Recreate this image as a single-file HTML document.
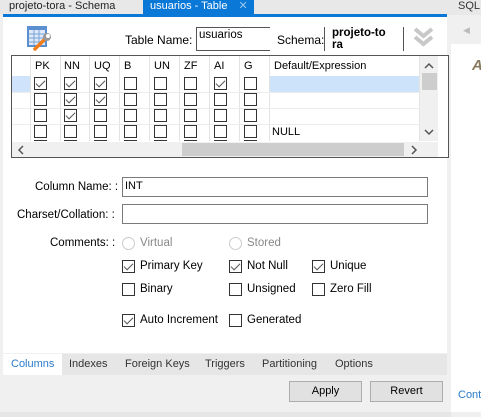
<!DOCTYPE html><html><head><style>
*{margin:0;padding:0;box-sizing:border-box}
body{width:481px;height:417px;background:#f0f0f0;font-family:"Liberation Sans",sans-serif;font-size:11px;color:#000;position:relative;overflow:hidden}
.a{position:absolute}
.cb{position:absolute;width:13px;height:13px;border:1px solid #333;background:#fff}
.cb.k::after{content:"";position:absolute;left:3px;top:0px;width:4px;height:8px;border:solid #555;border-width:0 1.2px 1.2px 0;transform:rotate(45deg)}
.lbl{position:absolute;font-size:11px}
.vl{position:absolute;top:56px;width:1px;height:85px;background:#e3e3e3}
.hl{position:absolute;left:12px;width:408px;height:1px;background:#ececec}
</style></head><body>
<div class="a" style="left:0;top:0;width:451px;height:15px;background:#e8e8e8"></div>
<div class="a" style="left:9px;top:0;font-size:11px;color:#222">projeto-tora - Schema</div>
<div class="a" style="left:143px;top:0;width:111px;height:15px;background:#0a78d7;color:#fff;font-size:11px;padding-left:7px;line-height:13px">usuarios - Table <span style="color:#9cc6ef;margin-left:8px">✕</span></div>
<div class="a" style="left:3px;top:14px;width:444px;height:3px;background:#0a78d7"></div>
<div class="a" style="left:3px;top:17px;width:444px;height:336px;background:#fff"></div>
<div class="a" style="left:451px;top:0;width:30px;height:15px;background:#e8e8e8;color:#333;padding-left:7px">SQL</div>
<div class="a" style="left:451px;top:15px;width:30px;height:29px;background:#f0f0f0;color:#bbb;padding:10px 0 0 12px;font-size:9px">◀</div>
<div class="a" style="left:451px;top:44px;width:30px;height:368px;background:#fff"></div>
<div class="a" style="left:472px;top:57px;font-weight:bold;font-style:italic;font-size:15px;color:#8a7a60">A</div>
<div class="a" style="left:458px;top:389px;color:#2a7ac9">Cont</div>
<!-- icon -->
<svg class="a" style="left:26px;top:25px" width="26" height="26"><rect x="1" y="1" width="20" height="21" fill="#5a8fd0"/><rect x="3" y="5" width="16" height="15" fill="#dfe9f7"/><g stroke="#7aa3d8"><line x1="3" y1="9" x2="19" y2="9"/><line x1="3" y1="13" x2="19" y2="13"/><line x1="3" y1="17" x2="19" y2="17"/><line x1="8" y1="5" x2="8" y2="20"/><line x1="13" y1="5" x2="13" y2="20"/></g><line x1="9" y1="24" x2="18" y2="15" stroke="#f07d1c" stroke-width="3.5" stroke-linecap="round"/><circle cx="21" cy="12" r="4" fill="#999"/><circle cx="22" cy="11" r="2" fill="#fff"/></svg>
<div class="lbl" style="left:125px;top:33px;font-size:12px">Table Name:</div>
<div class="a" style="left:196px;top:27px;width:74px;height:24px;border:1px solid #555;border-right:none;padding:1px 0 0 2px;font-size:11.5px">usuarios</div>
<div class="lbl" style="left:277px;top:33px;font-size:12px">Schema:</div>
<div class="a" style="left:324px;top:27px;width:80px;height:24px;border:1px solid #555;border-top:none;border-bottom:none"></div>
<div class="a" style="left:332px;top:27px;font-weight:bold;font-size:11.5px;line-height:12px">projeto-to<br>ra</div>
<svg class="a" style="left:413px;top:26px" width="21" height="22"><path d="M2 3 L10.5 10 L19 3 M2 11 L10.5 18 L19 11" fill="none" stroke="#c8c8c8" stroke-width="4"/></svg>
<!-- grid -->
<div class="a" style="left:11px;top:55px;width:438px;height:103px;border:1px solid #555;background:#fff"></div>
<div class="a" style="left:12px;top:76px;width:18px;height:16px;background:#cfe4fa"></div>
<div class="a" style="left:270px;top:76px;width:150px;height:16px;background:#cde3fa"></div>
<div class="vl" style="left:30px"></div><div class="vl" style="left:60px"></div><div class="vl" style="left:89px"></div><div class="vl" style="left:119px"></div><div class="vl" style="left:149px"></div><div class="vl" style="left:179px"></div><div class="vl" style="left:209px"></div><div class="vl" style="left:239px"></div><div class="vl" style="left:269px"></div><div class="vl" style="left:419px"></div>
<div class="hl" style="top:92px"></div><div class="hl" style="top:108px"></div><div class="hl" style="top:124px"></div>
<div class="lbl" style="left:35px;top:60px">PK</div><div class="lbl" style="left:64px;top:60px">NN</div><div class="lbl" style="left:94px;top:60px">UQ</div><div class="lbl" style="left:124px;top:60px">B</div><div class="lbl" style="left:154px;top:60px">UN</div><div class="lbl" style="left:184px;top:60px">ZF</div><div class="lbl" style="left:214px;top:60px">AI</div><div class="lbl" style="left:244px;top:60px">G</div><div class="lbl" style="left:274px;top:60px">Default/Expression</div>
<div class="lbl" style="left:272px;top:126px">NULL</div>
<div id="g"></div>
<div class="a" style="left:420px;top:56px;width:18px;height:85px;background:#f0f0f0"></div>
<div class="a" style="left:422px;top:73px;width:15px;height:17px;background:#cdcdcd"></div>
<svg class="a" style="left:424px;top:62px" width="10" height="8"><path d="M1 6 L5 2 L9 6" fill="none" stroke="#555" stroke-width="1.5"/></svg>
<svg class="a" style="left:424px;top:128px" width="10" height="8"><path d="M1 2 L5 6 L9 2" fill="none" stroke="#555" stroke-width="1.5"/></svg>
<div class="a" style="left:12px;top:142px;width:426px;height:15px;background:#f0f0f0"></div>
<div class="a" style="left:182px;top:143px;width:222px;height:13px;background:#cdcdcd"></div>
<svg class="a" style="left:17px;top:145px" width="8" height="10"><path d="M6 1 L2 5 L6 9" fill="none" stroke="#555" stroke-width="1.5"/></svg>
<svg class="a" style="left:410px;top:145px" width="8" height="10"><path d="M2 1 L6 5 L2 9" fill="none" stroke="#555" stroke-width="1.5"/></svg>
<!-- form -->
<div class="lbl" style="left:35px;top:181px;font-size:11.5px">Column Name: :</div>
<div class="a" style="left:122px;top:177px;width:306px;height:20px;border:1px solid #7a7a7a;padding:2px 0 0 2px">INT</div>
<div class="lbl" style="left:17px;top:209px;font-size:11.5px">Charset/Collation: :</div>
<div class="a" style="left:122px;top:204px;width:306px;height:20px;border:1px solid #7a7a7a"></div>
<div class="lbl" style="left:50px;top:237px;font-size:11.5px">Comments: :</div>
<div class="a" style="left:122px;top:237px;width:13px;height:13px;border:1px solid #ccc;border-radius:50%"></div>
<div class="lbl" style="left:140px;top:237px;color:#888;font-size:11.5px">Virtual</div>
<div class="a" style="left:229px;top:237px;width:13px;height:13px;border:1px solid #ccc;border-radius:50%"></div>
<div class="lbl" style="left:247px;top:237px;color:#888;font-size:11.5px">Stored</div>
<div class="cb k" style="left:122px;top:260px"></div><div class="lbl" style="left:140px;top:260px;font-size:11.5px">Primary Key</div>
<div class="cb k" style="left:229px;top:260px"></div><div class="lbl" style="left:247px;top:260px;font-size:11.5px">Not Null</div>
<div class="cb k" style="left:312px;top:260px"></div><div class="lbl" style="left:330px;top:260px;font-size:11.5px">Unique</div>
<div class="cb" style="left:122px;top:283px"></div><div class="lbl" style="left:140px;top:283px;font-size:11.5px">Binary</div>
<div class="cb" style="left:229px;top:283px"></div><div class="lbl" style="left:247px;top:283px;font-size:11.5px">Unsigned</div>
<div class="cb" style="left:312px;top:283px"></div><div class="lbl" style="left:330px;top:283px;font-size:11.5px">Zero Fill</div>
<div class="cb k" style="left:122px;top:314px"></div><div class="lbl" style="left:140px;top:314px;font-size:11.5px">Auto Increment</div>
<div class="cb" style="left:229px;top:314px"></div><div class="lbl" style="left:247px;top:314px;font-size:11.5px">Generated</div>
<!-- bottom tabs -->
<div class="a" style="left:3px;top:354px;width:444px;height:21px;background:#e6e6e6"></div>
<div class="a" style="left:3px;top:354px;width:59px;height:21px;background:#fff"></div>
<div class="lbl" style="left:11px;top:358px;color:#2a7ac9">Columns</div>
<div class="lbl" style="left:69px;top:358px;color:#333">Indexes</div>
<div class="lbl" style="left:125px;top:358px;color:#333">Foreign Keys</div>
<div class="lbl" style="left:205px;top:358px;color:#333">Triggers</div>
<div class="lbl" style="left:262px;top:358px;color:#333">Partitioning</div>
<div class="lbl" style="left:335px;top:358px;color:#333">Options</div>
<div class="a" style="left:289px;top:381px;width:73px;height:21px;background:#e1e1e1;border:1px solid #adadad;text-align:center;line-height:19px">Apply</div>
<div class="a" style="left:370px;top:381px;width:73px;height:21px;background:#e1e1e1;border:1px solid #adadad;text-align:center;line-height:19px">Revert</div>
<div class="a" style="left:0;top:412px;width:451px;height:5px;background:#e6e6e6"></div>
<script>
var xs=[34,64,94,124,154,184,214,244],ys=[77,93,109,125],
c=[[1,1,1,0,0,0,1,0],[0,1,1,0,0,0,0,0],[0,1,0,0,0,0,0,0],[0,0,0,0,0,0,0,0]],h='';
for(var r=0;r<4;r++)for(var i=0;i<8;i++)h+='<div class="cb'+(c[r][i]?' k':'')+'" style="left:'+xs[i]+'px;top:'+ys[r]+'px"></div>';
for(var i=0;i<8;i++)h+='<div class="a" style="left:'+xs[i]+'px;top:140px;width:13px;height:1px;background:#333"></div>';
document.getElementById('g').innerHTML=h;
</script>
</body></html>
